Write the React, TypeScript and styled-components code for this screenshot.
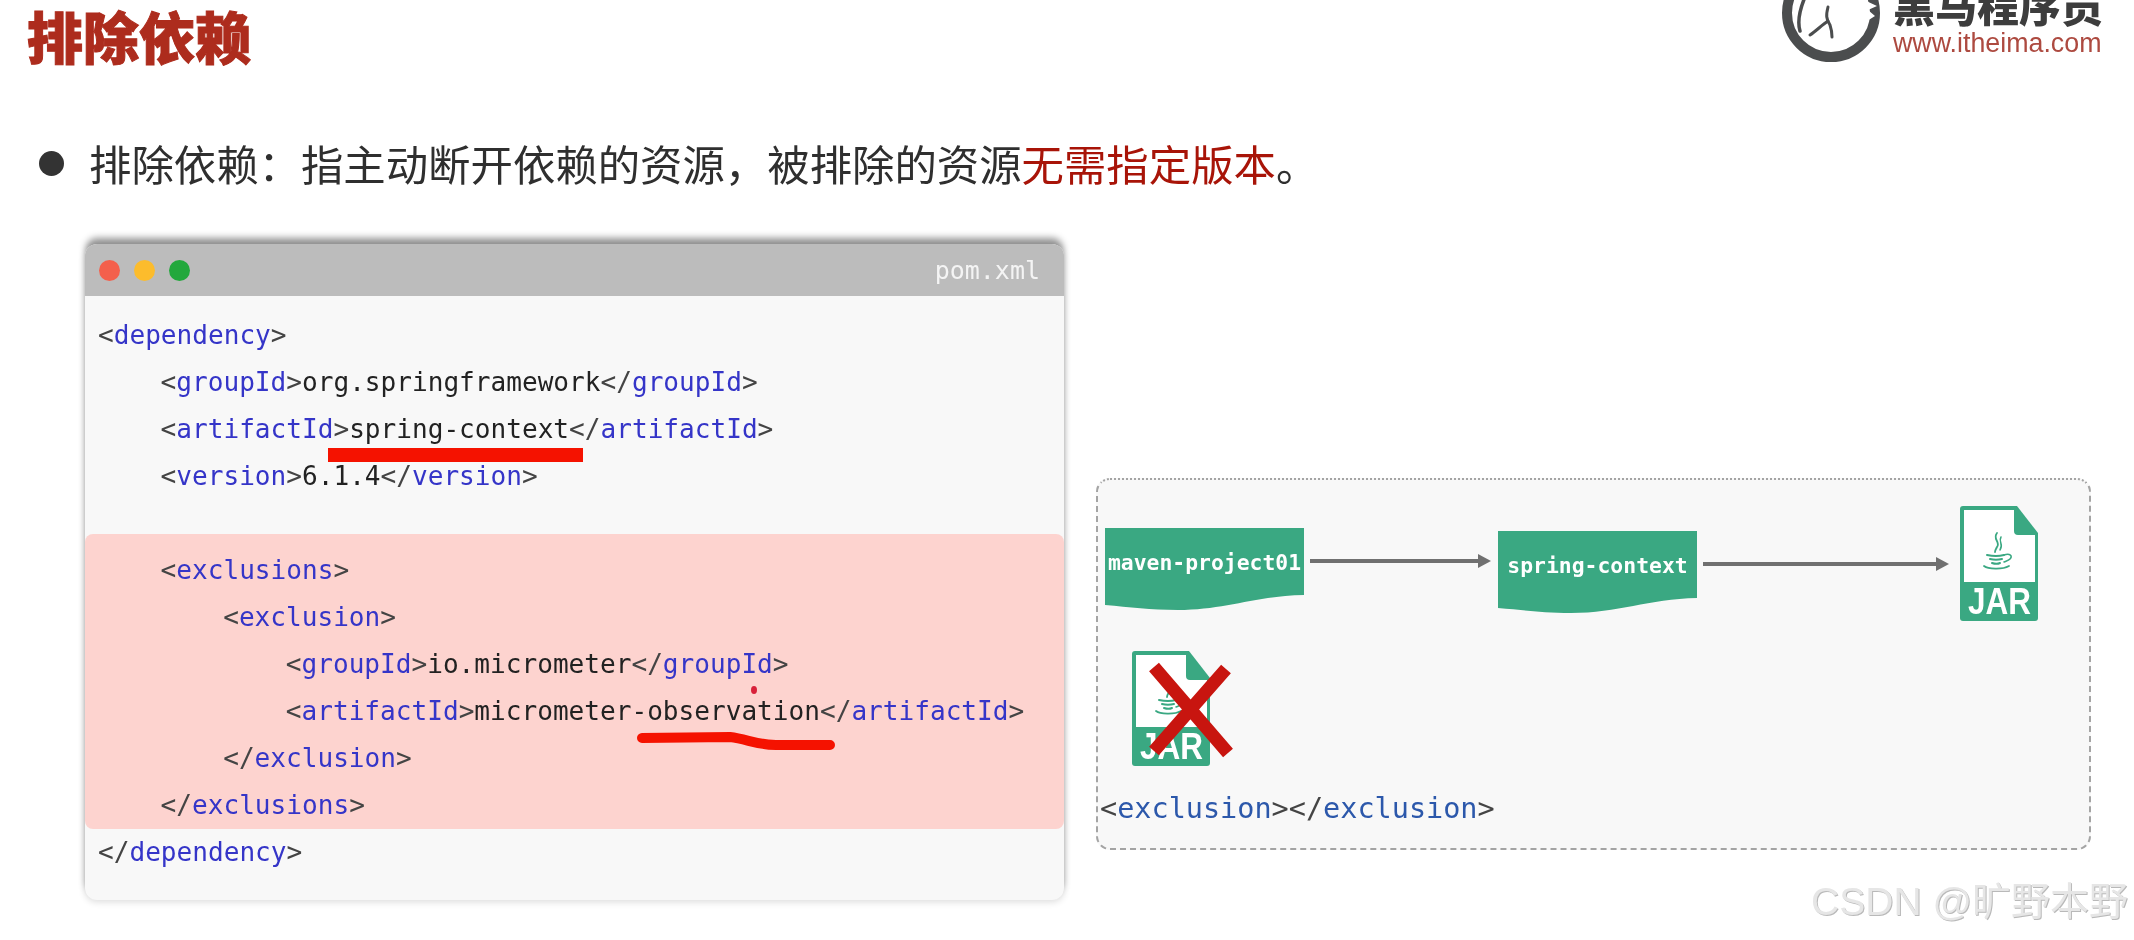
import styled, { createGlobalStyle } from "styled-components";

const GlobalStyle = createGlobalStyle`
  html, body {
    margin: 0;
    background: #fff;
  }
`;

const Page = styled.div`
  position: relative;
  width: 2134px;
  height: 940px;
  overflow: hidden;
  background: #fff;
  font-family: "Liberation Sans", "Noto Sans CJK SC", sans-serif;
  filter: blur(0.5px);
`;

const Header = styled.header`
  display: flex;
  justify-content: space-between;
  align-items: flex-start;
  height: 138px;
  padding: 0 31px 0 27px;
  box-sizing: border-box;
`;

const Title = styled.h1`
  margin: 0;
  font-family: "Noto Sans CJK SC", sans-serif;
  font-size: 56px;
  font-weight: 900;
  line-height: 70px;
  color: #ad2c1d;
  -webkit-text-stroke: 1px #ad2c1d;
`;

const Logo = styled.div`
  display: flex;
  align-items: flex-start;
  gap: 11px;
`;

const LogoMark = styled.svg`
  width: 100px;
  height: 100px;
  margin-top: -37px;
`;

const LogoText = styled.div`
  display: flex;
  flex-direction: column;
  margin-top: -20px;
`;

const Brand = styled.div`
  font-family: "Noto Sans CJK SC", sans-serif;
  font-size: 42px;
  font-weight: 900;
  line-height: 48px;
  color: #3d3d3d;
`;

const Url = styled.div`
  font-family: "Liberation Sans", sans-serif;
  font-size: 26.8px;
  line-height: 30px;
  color: #ad4a40;
`;

const BulletRow = styled.div`
  display: flex;
  align-items: center;
  gap: 25px;
  height: 50px;
  padding-left: 39px;
`;

const Bullet = styled.span`
  width: 25px;
  height: 25px;
  border-radius: 50%;
  background: #333;
`;

const BulletText = styled.p`
  margin: 0;
  font-family: "Noto Sans CJK SC", sans-serif;
  font-size: 42.4px;
  line-height: 50px;
  color: #2f2f2f;
`;

const Accent = styled.span`
  color: #a81408;
`;

const Content = styled.main`
  display: flex;
  align-items: flex-start;
  gap: 32px;
  margin-top: 56px;
  padding-left: 85px;
`;

const Window = styled.section`
  position: relative;
  width: 979px;
  height: 656px;
  border-radius: 12px;
  background: #f8f8f8;
  box-shadow: 0 -7px 7px -1px rgba(0, 0, 0, 0.42), 0 2px 7px rgba(0, 0, 0, 0.14);
`;

const TitleBar = styled.div`
  display: flex;
  align-items: center;
  gap: 14px;
  height: 52px;
  padding: 0 24px 0 14px;
  border-radius: 12px 12px 0 0;
  background: #bcbcbc;
`;

const Light = styled.span<{ $color: string }>`
  width: 21px;
  height: 21px;
  border-radius: 50%;
  background: ${props => props.$color};
`;

const FileName = styled.span`
  margin-left: auto;
  font-family: "DejaVu Sans Mono", monospace;
  font-size: 25px;
  color: #f4f4f4;
`;

const CodeBlock = styled.div`
  padding-top: 15.5px;
  font-family: "DejaVu Sans Mono", monospace;
  font-size: 26.1px;
  line-height: 47.1px;
  color: #222;
`;

const Excluded = styled.div`
  margin-top: 34px;
  padding-top: 13px;
  border-radius: 8px;
  background: #fdd3cf;
`;

const Row = styled.div<{ $level: number }>`
  height: 47.1px;
  padding-left: ${props => 13 + props.$level * 62.6}px;
  white-space: pre;
`;

const Bracket = styled.span`
  color: #444;
`;

const Tag = styled.span`
  color: #3535c8;
`;

const Annotations = styled.svg`
  position: absolute;
  left: 0;
  top: 0;
  width: 979px;
  height: 656px;
  pointer-events: none;
`;

const Panel = styled.section`
  width: 995px;
  height: 372px;
  margin-top: 234px;
  padding: 26px 0 0 7px;
  box-sizing: border-box;
  border: 2px dashed #a4a4a4;
  border-top-style: dotted;
  border-radius: 14px;
  background: #f8f8f8;
`;

const FlowRow = styled.div`
  display: flex;
  align-items: flex-start;
  height: 121px;
`;

const DocBox = styled.div<{ $offset: number; $left: number }>`
  display: flex;
  justify-content: center;
  align-items: flex-start;
  flex: none;
  width: 199px;
  height: 82px;
  margin: ${props => props.$offset}px 0 0 ${props => props.$left}px;
  padding-top: 19px;
  box-sizing: border-box;
  background: #3aa882;
  clip-path: path("M0 0H199V67C150 68 120 82 73 82C45 82 25 79 0 77Z");
  font-family: "DejaVu Sans Mono", monospace;
  font-size: 21.4px;
  font-weight: 700;
  line-height: 32px;
  color: #fff;
  white-space: pre;
`;

const ArrowIcon = styled.svg<{ $offset: number; $left: number }>`
  flex: none;
  height: 16px;
  margin: ${props => props.$offset}px 0 0 ${props => props.$left}px;
`;

const JarSlot = styled.div<{ $offset: number; $left: number }>`
  position: relative;
  flex: none;
  width: 78px;
  height: 115px;
  margin: ${props => props.$offset}px 0 0 ${props => props.$left}px;
`;

const JarIcon = styled.svg`
  display: block;
  width: 78px;
  height: 115px;
`;

const Cross = styled.svg`
  position: absolute;
  left: 14px;
  top: 10px;
  width: 90px;
  height: 100px;
`;

const ExclusionCode = styled.div`
  margin-top: 23px;
  margin-left: -5px;
  font-family: "DejaVu Sans Mono", monospace;
  font-size: 28.5px;
  line-height: 40px;
  color: #444;
`;

const ExclusionTag = styled.span`
  color: #2c58ab;
`;

const Watermark = styled.div`
  position: absolute;
  right: 6px;
  top: 877px;
  font-family: "Liberation Sans", "Noto Sans CJK SC", sans-serif;
  font-size: 39px;
  line-height: 50px;
  color: #e6e6e6;
  text-shadow: 1px 1px 0 #b9b9b9, -1px -1px 0 #fff;
  white-space: pre;
`;

const Jar = () => (
  <JarIcon viewBox="0 0 78 115">
    <path
      d="M3 0H57L78 27V112a3 3 0 0 1-3 3H3a3 3 0 0 1-3-3V3a3 3 0 0 1 3-3Z"
      fill="#3aa882"
    />
    <path d="M4 4H54V25Q54 29 58 29H75V76H4Z" fill="#fff" />
    <g fill="none" stroke="#3aa882" strokeLinecap="round">
      <path d="M37 27C32 33 41 36 37 41C36 43 35 44 35 46" strokeWidth="1.8" />
      <path d="M41 31C38 36 44 38 40 44" strokeWidth="1.5" />
      <path d="M27 49C32 50 40 50 44 49" strokeWidth="2" />
      <path d="M30 53C34 54 38 54 42 53" strokeWidth="2" />
      <path d="M32 57C35 58 38 58 40 57" strokeWidth="2" />
      <path d="M44 49C50 47 53 50 50 53C48 55 46 55 44 56" strokeWidth="1.6" />
      <path d="M24 60C28 63 42 64 49 60" strokeWidth="1.8" />
    </g>
    <text
      x="8"
      y="108"
      fontFamily="Liberation Sans, sans-serif"
      fontSize="37"
      fontWeight="700"
      fill="#fff"
      textLength="63"
      lengthAdjust="spacingAndGlyphs"
    >
      JAR
    </text>
  </JarIcon>
);

const Arrow = ({
  width,
  offset,
  left,
}: {
  width: number;
  offset: number;
  left: number;
}) => (
  <ArrowIcon
    $offset={offset}
    $left={left}
    width={width}
    viewBox={`0 0 ${width} 16`}
  >
    <rect x="0" y="6" width={width - 8} height="4" fill="#707070" />
    <path d={`M${width - 13} 1L${width} 8L${width - 13} 15Z`} fill="#707070" />
  </ArrowIcon>
);

const Open = ({ name }: { name: string }) => (
  <>
    <Bracket>&lt;</Bracket>
    <Tag>{name}</Tag>
    <Bracket>&gt;</Bracket>
  </>
);

const Close = ({ name }: { name: string }) => (
  <>
    <Bracket>&lt;/</Bracket>
    <Tag>{name}</Tag>
    <Bracket>&gt;</Bracket>
  </>
);

const Element = ({
  name,
  value,
  level,
}: {
  name: string;
  value: string;
  level: number;
}) => (
  <Row $level={level}>
    <Open name={name} />
    {value}
    <Close name={name} />
  </Row>
);

const App = () => {
  return (
    <Page>
      <GlobalStyle />
      <Header>
        <Title>排除依赖</Title>
        <Logo>
          <LogoMark viewBox="0 0 100 100">
            <circle
              cx="49"
              cy="50"
              r="44"
              fill="none"
              stroke="#4b4d4e"
              strokeWidth="10"
            />
            <path d="M80 36L95 43L86 47L93 53L82 60Z" fill="#fff" />
            <g fill="none" stroke="#4b4d4e" strokeLinecap="round">
              <path d="M23 34C18 46 15 58 18 68" strokeWidth="3.5" />
              <path d="M46 44C44 52 44 56 48 62C50 68 50 70 50 74" strokeWidth="3" />
              <path d="M46 58C40 62 34 68 28 72" strokeWidth="3" />
            </g>
          </LogoMark>
          <LogoText>
            <Brand>黑马程序员</Brand>
            <Url>www.itheima.com</Url>
          </LogoText>
        </Logo>
      </Header>

      <BulletRow>
        <Bullet />
        <BulletText>
          排除依赖：指主动断开依赖的资源，被排除的资源
          <Accent>无需指定版本</Accent>。
        </BulletText>
      </BulletRow>

      <Content>
        <Window>
          <TitleBar>
            <Light $color="#f4604c" />
            <Light $color="#fcbc2c" />
            <Light $color="#22a83c" />
            <FileName>pom.xml</FileName>
          </TitleBar>
          <CodeBlock>
            <Row $level={0}>
              <Open name="dependency" />
            </Row>
            <Element level={1} name="groupId" value="org.springframework" />
            <Element level={1} name="artifactId" value="spring-context" />
            <Element level={1} name="version" value="6.1.4" />
            <Excluded>
              <Row $level={1}>
                <Open name="exclusions" />
              </Row>
              <Row $level={2}>
                <Open name="exclusion" />
              </Row>
              <Element level={3} name="groupId" value="io.micrometer" />
              <Element level={3} name="artifactId" value="micrometer-observation" />
              <Row $level={2}>
                <Close name="exclusion" />
              </Row>
              <Row $level={1}>
                <Close name="exclusions" />
              </Row>
            </Excluded>
            <Row $level={0}>
              <Close name="dependency" />
            </Row>
          </CodeBlock>
          <Annotations viewBox="0 0 979 656">
            <rect x="243" y="204" width="255" height="14" fill="#f51200" />
            <path
              d="M557 494L645 493C662 495 672 501 691 501L745 501"
              fill="none"
              stroke="#f51200"
              strokeWidth="10"
              strokeLinecap="round"
            />
            <ellipse cx="669" cy="446" rx="3" ry="4" fill="#d8203a" />
          </Annotations>
        </Window>

        <Panel>
          <FlowRow>
            <DocBox $offset={22} $left={0}>
              maven-project01
            </DocBox>
            <Arrow width={181} offset={47} left={6} />
            <DocBox $offset={25} $left={7}>
              spring-context
            </DocBox>
            <Arrow width={246} offset={50} left={6} />
            <JarSlot $offset={0} $left={11}>
              <Jar />
            </JarSlot>
          </FlowRow>
          <JarSlot $offset={24} $left={27}>
            <Jar />
            <Cross viewBox="0 0 90 100">
              <path
                d="M8 6L82 92M80 8L8 90"
                fill="none"
                stroke="#c8150f"
                strokeWidth="13"
              />
            </Cross>
          </JarSlot>
          <ExclusionCode>
            &lt;<ExclusionTag>exclusion</ExclusionTag>&gt;&lt;/
            <ExclusionTag>exclusion</ExclusionTag>&gt;
          </ExclusionCode>
        </Panel>
      </Content>

      <Watermark>CSDN @旷野本野</Watermark>
    </Page>
  );
};

export default App;
